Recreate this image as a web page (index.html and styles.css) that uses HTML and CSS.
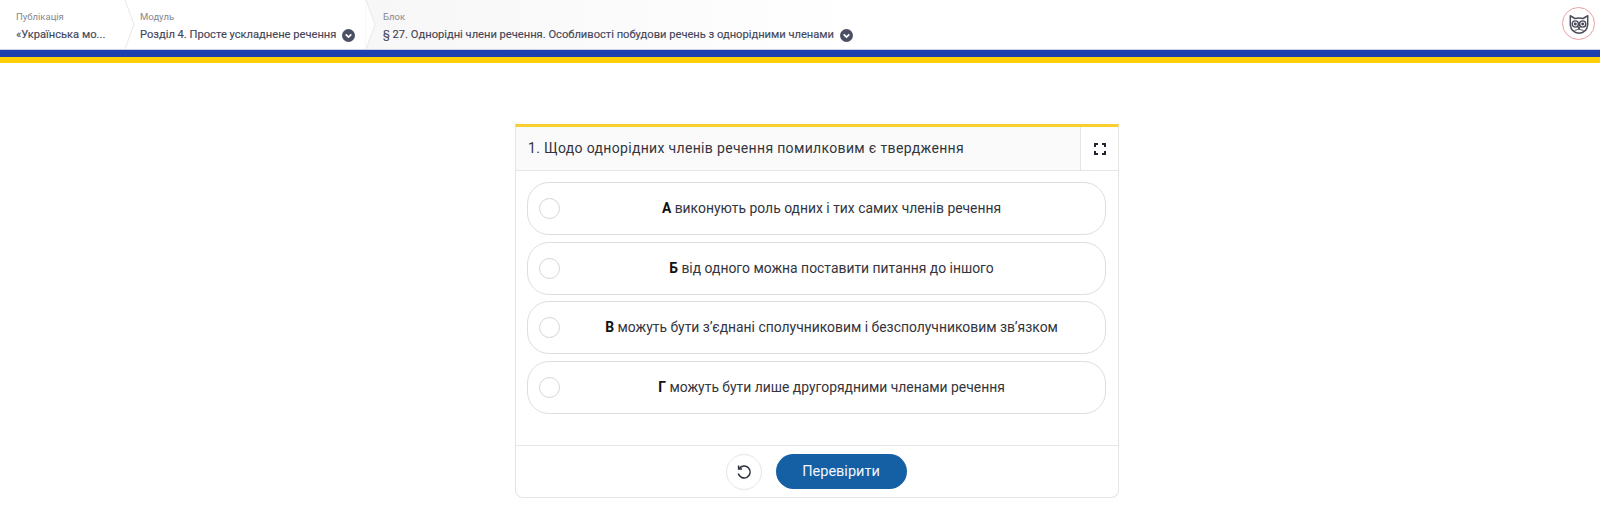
FILE: index.html
```html
<!DOCTYPE html>
<html lang="uk">
<head>
<meta charset="utf-8">
<title>Тест</title>
<link rel="stylesheet" href="styles.css">
</head>
<body>
<header class="topbar">
  <nav class="crumbs">
    <div class="crumb crumb-pub">
      <span class="crumb-label">Публікація</span>
      <span class="crumb-value"><span>«Українська мо...</span></span>
      <svg class="chev" viewBox="0 0 12 49"><path d="M1 0 L10 24.5 L1 49" fill="#fff" stroke="#e8e8e8"/></svg>
    </div>
    <div class="crumb crumb-mod">
      <span class="crumb-label">Модуль</span>
      <span class="crumb-value"><span>Розділ 4. Просте ускладнене речення</span>
        <svg class="caret" viewBox="0 0 12 12"><circle cx="6" cy="6" r="6" fill="#4a4f63"/><path d="M3.4 4.9 6 7.5 8.6 4.9" fill="none" stroke="#fff" stroke-width="1.6"/></svg>
      </span>
      <svg class="chev" viewBox="0 0 12 49"><path d="M1 0 L10 24.5 L1 49" fill="#fff" stroke="#e8e8e8"/></svg>
    </div>
    <div class="crumb crumb-block">
      <span class="crumb-label">Блок</span>
      <span class="crumb-value"><span>§ 27. Однорідні члени речення. Особливості побудови речень з однорідними членами</span>
        <svg class="caret" viewBox="0 0 12 12"><circle cx="6" cy="6" r="6" fill="#4a4f63"/><path d="M3.4 4.9 6 7.5 8.6 4.9" fill="none" stroke="#fff" stroke-width="1.6"/></svg>
      </span>
    </div>
  </nav>
  <div class="avatar">
    <svg viewBox="0 0 24 24" class="owl" fill="none" stroke="#4a4d5a" stroke-width="1.6" stroke-linejoin="round">
      <path d="M2.500 3 L7.500 6 Q12 5 16.500 6 L21.500 3 L21.500 13 Q20.500 21.500 12 22 Q3.500 21.500 2.500 13 Z"/>
      <circle cx="8" cy="12" r="3.400"/>
      <circle cx="16" cy="12" r="3.400"/>
      <path d="M11 15 L12 17 L13 15"/>
      <path d="M7 19 Q12 16.500 17 19" stroke-width="1"/>
      <circle cx="8" cy="12" r="0.800" fill="#4a4d5a"/>
      <circle cx="16" cy="12" r="0.800" fill="#4a4d5a"/>
    </svg>
  </div>
</header>
<div class="flag"></div>
<main class="page">
  <section class="card">
    <div class="card-head">
      <h1 class="question">1. Щодо однорідних членів речення помилковим є твердження</h1>
      <button class="expand" type="button" aria-label="На весь екран">
        <svg viewBox="0 0 12 12" fill="none" stroke="#1f2430" stroke-width="2"><path d="M1 4V1H4M8 1H11V4M11 8V11H8M4 11H1V8"/></svg>
      </button>
    </div>
    <div class="options">
      <label class="option"><span class="radio"></span><span class="option-text"><b>А</b> виконують роль одних і тих самих членів речення</span></label>
      <label class="option"><span class="radio"></span><span class="option-text"><b>Б</b> від одного можна поставити питання до іншого</span></label>
      <label class="option"><span class="radio"></span><span class="option-text"><b>В</b> можуть бути з’єднані сполучниковим і безсполучниковим зв’язком</span></label>
      <label class="option"><span class="radio"></span><span class="option-text"><b>Г</b> можуть бути лише другорядними членами речення</span></label>
    </div>
    <div class="card-foot">
      <button class="reset" type="button" aria-label="Скинути">
        <svg viewBox="0 0 16 16" fill="none" stroke="#2b2f3a" stroke-width="1.500"><path d="M3.200 4.600 A6 6 0 1 1 2.300 9.500"/><path d="M2.600 1.600 V5 H6" /></svg>
      </button>
      <button class="check" type="button">Перевірити</button>
    </div>
  </section>
</main>
</body>
</html>
```

FILE: styles.css
```css
* { box-sizing: border-box; }
html, body { margin: 0; padding: 0; }
body {
  height: 509px;
  overflow: hidden;
  background: #fff;
  font-family: "Roboto", "Liberation Sans", sans-serif;
  color: #2a2d36;
}
.topbar {
  height: 49px;
  display: flex;
  justify-content: space-between;
  background: #fff;
}
.crumbs { display: flex; flex: 1; }
.crumb {
  position: relative;
  display: flex;
  flex-direction: column;
  padding-top: 11px;
}
.crumb-pub { width: 124px; padding-left: 16px; }
.crumb-mod { width: 241px; padding-left: 16px; }
.crumb-block {
  flex: 0 0 500px;
  padding-left: 18px;
  background: linear-gradient(90deg, #f7f7f7, #fff);
}
.crumb-label {
  font-size: 9.500px;
  line-height: 12px;
  color: #85878f;
}
.crumb-value {
  display: flex;
  align-items: center;
  gap: 6px;
  margin-top: 5px;
  font-size: 11.150px;
  line-height: 14px;
  font-weight: 400;
  -webkit-text-stroke: 0.15px #44475a;
  color: #44475a;
  white-space: nowrap;
}
.caret { width: 13px; height: 13px; flex: none; margin-top: 1px; }
.chev {
  position: absolute;
  top: 0;
  left: 100%;
  width: 12px;
  height: 49px;
  z-index: 1;
}
.avatar {
  width: 33px;
  height: 33px;
  margin: 7px 5px 0 0;
  border: 1.500px solid #e8a0a3;
  border-radius: 50%;
  display: flex;
  align-items: center;
  justify-content: center;
}
.owl { width: 22px; height: 22px; }
.flag {
  height: 14px;
  background: linear-gradient(#1e3fae 0 7px, #ffcf0a 7px 14px);
  border-top: 1px solid #c8d0ea;
}
.page {
  display: flex;
  justify-content: center;
  padding: 60px 0 0 34px;
}
.card {
  width: 604px;
  height: 374px;
  display: flex;
  flex-direction: column;
  margin-top: 1px;
  border: 1px solid #e4e4e4;
  border-top: 3px solid #f7d02f;
  border-radius: 0 0 8px 8px;
}
.card-head {
  height: 44px;
  display: flex;
  border-bottom: 1px solid #e6e6e6;
  background: #fafafa;
}
.question {
  flex: 1;
  margin: 0;
  padding-left: 12px;
  font-size: 14px;
  font-weight: 400;
  letter-spacing: 0.33px;
  line-height: 42px;
  color: #33353e;
}
.expand {
  width: 38px;
  border: 0;
  border-left: 1px solid #e6e6e6;
  background: #fff;
  padding: 0;
  display: flex;
  align-items: center;
  justify-content: center;
}
.expand svg { width: 12px; height: 12px; }
.options {
  flex: 1;
  display: flex;
  flex-direction: column;
  gap: 6.500px;
  padding: 11px 12px 0 11px;
}
.option {
  height: 53px;
  display: flex;
  align-items: center;
  border: 1px solid #dedede;
  border-radius: 22px;
  padding-left: 11px;
}
.radio {
  flex: none;
  width: 21px;
  height: 21px;
  border: 1px solid #d5d5d5;
  border-radius: 50%;
}
.option-text {
  flex: 1;
  text-align: center;
  font-size: 13.900px;
  line-height: 16px;
  padding: 0 2px 1px 0;
  color: #33353e;
}
.option-text b { color: #111; font-weight: 700; }
.card-foot {
  height: 52px;
  display: flex;
  justify-content: center;
  align-items: flex-start;
  gap: 14px;
  padding: 8px 2px 0 0;
  border-top: 1px solid #e6e6e6;
}
.reset {
  width: 36px;
  height: 36px;
  padding: 0;
  border: 1px solid #e6e6e6;
  border-radius: 50%;
  background: #fff;
  display: flex;
  align-items: center;
  justify-content: center;
}
.reset svg { width: 16px; height: 16px; }
.check {
  width: 131px;
  height: 35px;
  border: 0;
  border-radius: 18px;
  background: #1560a5;
  color: #f2f6fa;
  font-family: inherit;
  font-size: 14.500px;
  font-weight: 400;
}
```
